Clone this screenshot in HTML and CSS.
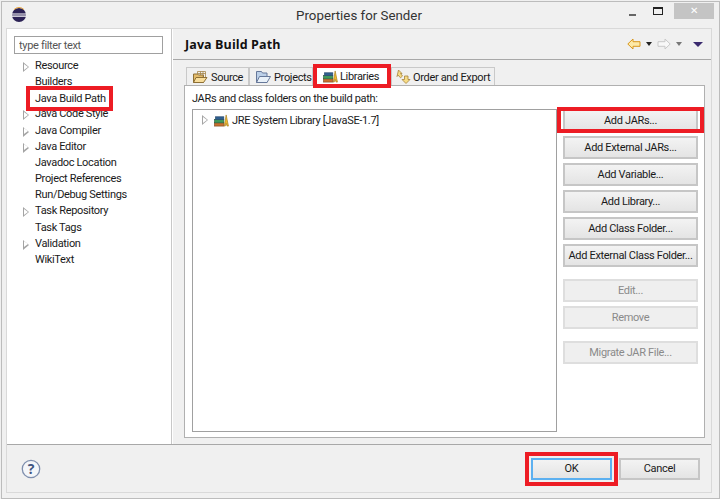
FILE: index.html
```html
<!DOCTYPE html>
<html lang="en">
<head>
  <meta charset="UTF-8" />
  <title>Properties for Sender</title>
  <link rel="stylesheet" href="styles.css">
</head>
<body>
  <div class="window">
    <header class="titlebar">
      <svg class="logo" width="16" height="16" viewBox="0 0 16 16">
        <circle cx="8" cy="8" r="7" fill="#2c2255"/>
        <path d="M1 6.400h14v1.100H1zM1 8.600h14v1.100H1z" fill="#fff"/>
        <path d="M3 2.600a7 7 0 0 1 10 0" stroke="#e8a33a" stroke-width="1" fill="none"/>
      </svg>
      <span class="title">Properties for Sender</span>
      <div class="controls">
        <span class="min"></span>
        <span class="max"></span>
        <span class="close">&#10005;</span>
      </div>
    </header>

    <div class="frame">
      <div class="main">
        <aside class="sidebar">
          <input class="filter" type="text" placeholder="type filter text">
          <ul class="tree">
            <li class="has-kids">Resource</li>
            <li>Builders</li>
            <li><span class="mark mark-nav">Java Build Path</span></li>
            <li class="has-kids">Java Code Style</li>
            <li class="has-kids">Java Compiler</li>
            <li class="has-kids">Java Editor</li>
            <li>Javadoc Location</li>
            <li>Project References</li>
            <li>Run/Debug Settings</li>
            <li class="has-kids">Task Repository</li>
            <li>Task Tags</li>
            <li class="has-kids">Validation</li>
            <li>WikiText</li>
          </ul>
        </aside>

        <section class="content">
          <div class="heading">
            <h1>Java Build Path</h1>
            <div class="nav-icons">
              <svg width="14" height="12" viewBox="0 0 14 12"><path d="M.8 6 6 1v2.700h7v4.600H6V11z" fill="#fde9a8" stroke="#d8961c"/></svg>
              <span class="caret"></span>
              <svg width="14" height="12" viewBox="0 0 14 12"><path d="M13.200 6 8 1v2.700H1v4.600h7V11z" fill="#f8f8f8" stroke="#c8c8c8"/></svg>
              <span class="caret caret-grey"></span>
              <span class="caret caret-purple"></span>
            </div>
          </div>

          <div class="tabs">
            <div class="tab tab-source">
              <svg width="16" height="14" viewBox="0 0 16 14"><path d="M1.500 4h4l1 1h5v7.500h-10z" fill="#e3bb6a" stroke="#8d6f35"/><path d="M5.500 4V1.500h8V8M8.500 1.500V5M5.500 3.500h8M11 1.500V8" fill="none" stroke="#a5854a" stroke-width=".8"/><path d="M1.500 12.500l2.500-5h11l-3.500 5z" fill="#f8dd9b" stroke="#8d6f35"/></svg>
              Source
            </div>
            <div class="tab tab-projects">
              <svg width="16" height="14" viewBox="0 0 16 14"><path d="M1.500 1.500h5l1 1.500h4.500v9.500H1.500z" fill="#bcd0e8" stroke="#66789a"/><path d="M1.500 12.500l3-6h11l-3.500 6z" fill="#e8f0f8" stroke="#66789a"/></svg>
              Projects
            </div>
            <div class="tab tab-active mark">
              <svg width="15" height="13" viewBox="0 0 16 14"><use href="#books"/></svg>
              Libraries
            </div>
            <div class="tab tab-order">
              <svg width="18" height="16" viewBox="0 0 18 16"><path d="M4.500 1 8 4.500H6.500l2 2.500-2 1.800-2.300-2.600L3 7.500z" fill="#f7dc85" stroke="#a5823a" stroke-width=".8"/><path d="M12 14.500l4-4h-2V7h-3.500v3.500H8z" fill="#f7dc85" stroke="#a5823a" stroke-width=".8"/></svg>
              Order and Export
            </div>
          </div>

          <div class="panel">
            <div class="panel-left">
              <p class="panel-label">JARs and class folders on the build path:</p>
              <div class="jar-tree">
                <div class="jar-row">
                  <span class="twisty"></span>
                  <svg width="15" height="13" viewBox="0 0 16 14"><use href="#books"/></svg>
                  JRE System Library [JavaSE-1.7]
                </div>
              </div>
            </div>
            <div class="actions">
              <button class="btn mark-btn">Add JARs...</button>
              <button class="btn">Add External JARs...</button>
              <button class="btn">Add Variable...</button>
              <button class="btn">Add Library...</button>
              <button class="btn">Add Class Folder...</button>
              <button class="btn">Add External Class Folder...</button>
              <button class="btn btn-off gap-top">Edit...</button>
              <button class="btn btn-off">Remove</button>
              <button class="btn btn-off gap-top">Migrate JAR File...</button>
            </div>
          </div>
        </section>
      </div>

      <footer class="footer">
        <svg class="help" width="20" height="20" viewBox="0 0 20 20">
          <circle cx="10" cy="10" r="8.700" fill="#f4f6f9" stroke="#7f8fae" stroke-width="1.300"/>
          <text x="10" y="15" text-anchor="middle" class="help-q">?</text>
        </svg>
        <div class="footer-btns">
          <button class="btn btn-ok mark mark-ok">OK</button>
          <button class="btn btn-cancel">Cancel</button>
        </div>
      </footer>
    </div>
  </div>

  <svg width="0" height="0" class="defs">
    <defs>
      <g id="books">
        <rect x=".5" y="9.500" width="10" height="3.500" fill="#c9702e" stroke="#7d4a22" stroke-width=".7"/>
        <rect x=".5" y="6" width="10" height="3.500" fill="#3f9a5a" stroke="#2b5f3d" stroke-width=".7"/>
        <rect x="1.500" y="3" width="9" height="3" fill="#2f5f8f" stroke="#27486c" stroke-width=".7"/>
        <path d="M11 13 13 1l2.500 12h-1.500l-1-3-1 3z" fill="#f0b92f" stroke="#a67c1a" stroke-width=".7"/>
      </g>
    </defs>
  </svg>
</body>
</html>
```

FILE: styles.css
```css
* {
  box-sizing: border-box;
}

body {
  margin: 0;
  background-color: #f0f0f0;
  font-family: "Roboto", "Open Sans", sans-serif;
  font-size: 11px;
  letter-spacing: -0.33px;
  color: #1a1a1a;
}

.defs {
  display: block;
}

.window {
  width: 719px;
  height: 498px;
  margin: 1px 0 0 1px;
  border: 1px solid #bcbcbc;
  background-color: #f0f0f0;
  display: flex;
  flex-direction: column;
}

/* title bar */
.titlebar {
  height: 26px;
  display: grid;
  grid-template-columns: 1fr auto 1fr;
  align-items: center;
  padding-left: 9px;
  flex: none;
}

.title {
  font-size: 13.300px;
  letter-spacing: 0;
  color: #333;
  margin-right: 12px;
}

.controls {
  display: flex;
  align-items: flex-start;
  align-self: flex-start;
  justify-self: end;
  margin-right: 5px;
  padding-top: 1px;
}

.min {
  width: 7px;
  height: 2px;
  background-color: #666;
  margin: 11px 17px 0 0;
}

.max {
  width: 10px;
  height: 8px;
  border: 1px solid #222;
  border-top-width: 2px;
  margin: 4px 11px 0 0;
}

.close {
  width: 40px;
  height: 16px;
  background-color: #c4c4c4;
  color: #fff;
  font-size: 10px;
  line-height: 16px;
  text-align: center;
}

/* main frame */
.frame {
  width: 706px;
  height: 465px;
  margin-left: 4px;
  border: 1px solid #d9d9d9;
  display: flex;
  flex-direction: column;
  flex: none;
}

.main {
  height: 416px;
  display: flex;
  border-bottom: 1px solid #a8a8a8;
}

.sidebar {
  width: 165px;
  background-color: #fff;
  border-right: 1px solid #c8c8c8;
  padding: 7px 0 0 7px;
  flex: none;
}

.filter {
  display: block;
  width: 149px;
  height: 18px;
  padding: 0 4px;
  border: 1px solid #a0a0a0;
  font: inherit;
  letter-spacing: inherit;
  outline: none;
}

.filter::placeholder {
  color: #555;
}

.tree {
  list-style: none;
  margin: 4px 0 0;
  padding: 0 0 0 21px;
}

.tree li {
  height: 16.170px;
  line-height: 16px;
  white-space: nowrap;
  position: relative;
}

.has-kids::before,
.twisty {
  content: "";
  position: absolute;
  left: -12px;
  top: 4px;
  width: 0;
  border-left: 6px solid #a4a4a4;
  border-top: 5px solid transparent;
  border-bottom: 5px solid transparent;
}

.has-kids::after {
  content: "";
  position: absolute;
  left: -11px;
  top: 5.500px;
  width: 0;
  border-left: 4px solid #fff;
  border-top: 3.500px solid transparent;
  border-bottom: 3.500px solid transparent;
}

.twisty::after {
  content: "";
  position: absolute;
  left: -5px;
  top: -3.500px;
  width: 0;
  border-left: 4px solid #fff;
  border-top: 3.500px solid transparent;
  border-bottom: 3.500px solid transparent;
}

/* the red boxes somebody drew on the screenshot */
.mark {
  outline: 4px solid #ed1c24;
}

.mark-nav {
  display: inline-block;
  background-color: #fff;
  padding: 0 3px 0 5px;
  margin-left: -5px;
  line-height: 17px;
  position: relative;
  z-index: 1;
}

/* right side */
.content {
  flex: 1;
  padding: 0 6px 0 11px;
  border-left: 1px solid #fff;
  display: flex;
  flex-direction: column;
}

.heading {
  height: 31px;
  margin: 0 -6px 0 -11px;
  padding: 0 8px 0 12px;
  border-bottom: 1px solid #a8a8a8;
  display: flex;
  align-items: center;
  justify-content: space-between;
  flex: none;
}

h1 {
  margin: 0;
  font-family: "Open Sans", sans-serif;
  font-size: 12.500px;
  font-weight: 700;
  letter-spacing: 0.1px;
  color: #111;
}

.nav-icons {
  display: flex;
  align-items: center;
  gap: 5px;
}

.caret {
  border-top: 4px solid #222;
  border-left: 3.500px solid transparent;
  border-right: 3.500px solid transparent;
}

.caret-grey {
  border-top-color: #777;
}

.caret-purple {
  border-top-color: #3a2a6e;
  border-top-width: 5px;
  border-left-width: 5px;
  border-right-width: 5px;
  margin-left: 6px;
}

.tabs {
  display: flex;
  height: 25px;
  padding: 7px 0 0 2px;
  flex: none;
  align-items: flex-end;
  position: relative;
  z-index: 1;
}

.tab {
  height: 18px;
  display: flex;
  align-items: center;
  gap: 3px;
  padding: 1px 0 0 5px;
  background-color: #f0f0f0;
  border: 1px solid #c9c9c9;
  border-bottom: none;
  white-space: nowrap;
}

.tab svg {
  flex: none;
}

.tab-source {
  width: 63px;
}

.tab-projects {
  width: 64px;
  margin-right: 4px;
}

.tab-active {
  width: 70px;
  height: 16px;
  margin: 0 4px 1px 0;
  background-color: #fff;
  border: none;
  padding: 0 0 0 6px;
  gap: 2px;
}

.tab-order {
  width: 104px;
  gap: 1px;
  padding-left: 2px;
}

.panel {
  width: 521px;
  height: 353px;
  background-color: #fff;
  border: 1px solid #b0b0b0;
  display: flex;
  padding: 0 6px 0 7px;
  flex: none;
}

.panel-left {
  width: 365px;
  margin-right: 6px;
  flex: none;
}

.panel-label {
  margin: 0;
  height: 23px;
  line-height: 26px;
}

.jar-tree {
  height: 323px;
  border: 1px solid #a0a0a0;
  padding: 2px 0 0 21px;
}

.jar-row {
  display: flex;
  align-items: center;
  gap: 3px;
  height: 16px;
  position: relative;
}

.twisty {
  top: 3px;
}

.actions {
  padding-top: 23px;
  width: 135px;
  flex: none;
  display: flex;
  flex-direction: column;
  gap: 4px;
}

.btn {
  display: block;
  width: 135px;
  height: 23px;
  padding: 0;
  font: inherit;
  letter-spacing: inherit;
  color: #1a1a1a;
  text-align: center;
  background: linear-gradient(#f3f3f3, #e4e4e4);
  border: 2px solid #c6c6c6;
  white-space: nowrap;
}

.btn-off {
  background: #efefef;
  border-color: #dedede;
  color: #8a8a8a;
}

.gap-top {
  margin-top: 8px;
}

.mark-btn {
  position: relative;
}

.mark-btn::after {
  content: "";
  box-sizing: border-box;
  position: absolute;
  left: -8px;
  right: -8px;
  top: -4px;
  height: 26px;
  border: 4px solid #ed1c24;
}

/* footer */
.footer {
  flex: 1;
  display: flex;
  align-items: center;
  justify-content: space-between;
  padding: 0 11px 0 14px;
}

.help-q {
  font-size: 14px;
  font-weight: 700;
  fill: #3f5480;
  font-family: "Open Sans", sans-serif;
}

.footer-btns {
  display: flex;
  gap: 7px;
}

.btn-ok,
.btn-cancel {
  width: 81px;
  height: 22px;
}

.btn-ok {
  border-color: #5cb0f0;
}

.mark-ok {
  outline-offset: 2px;
}
```
